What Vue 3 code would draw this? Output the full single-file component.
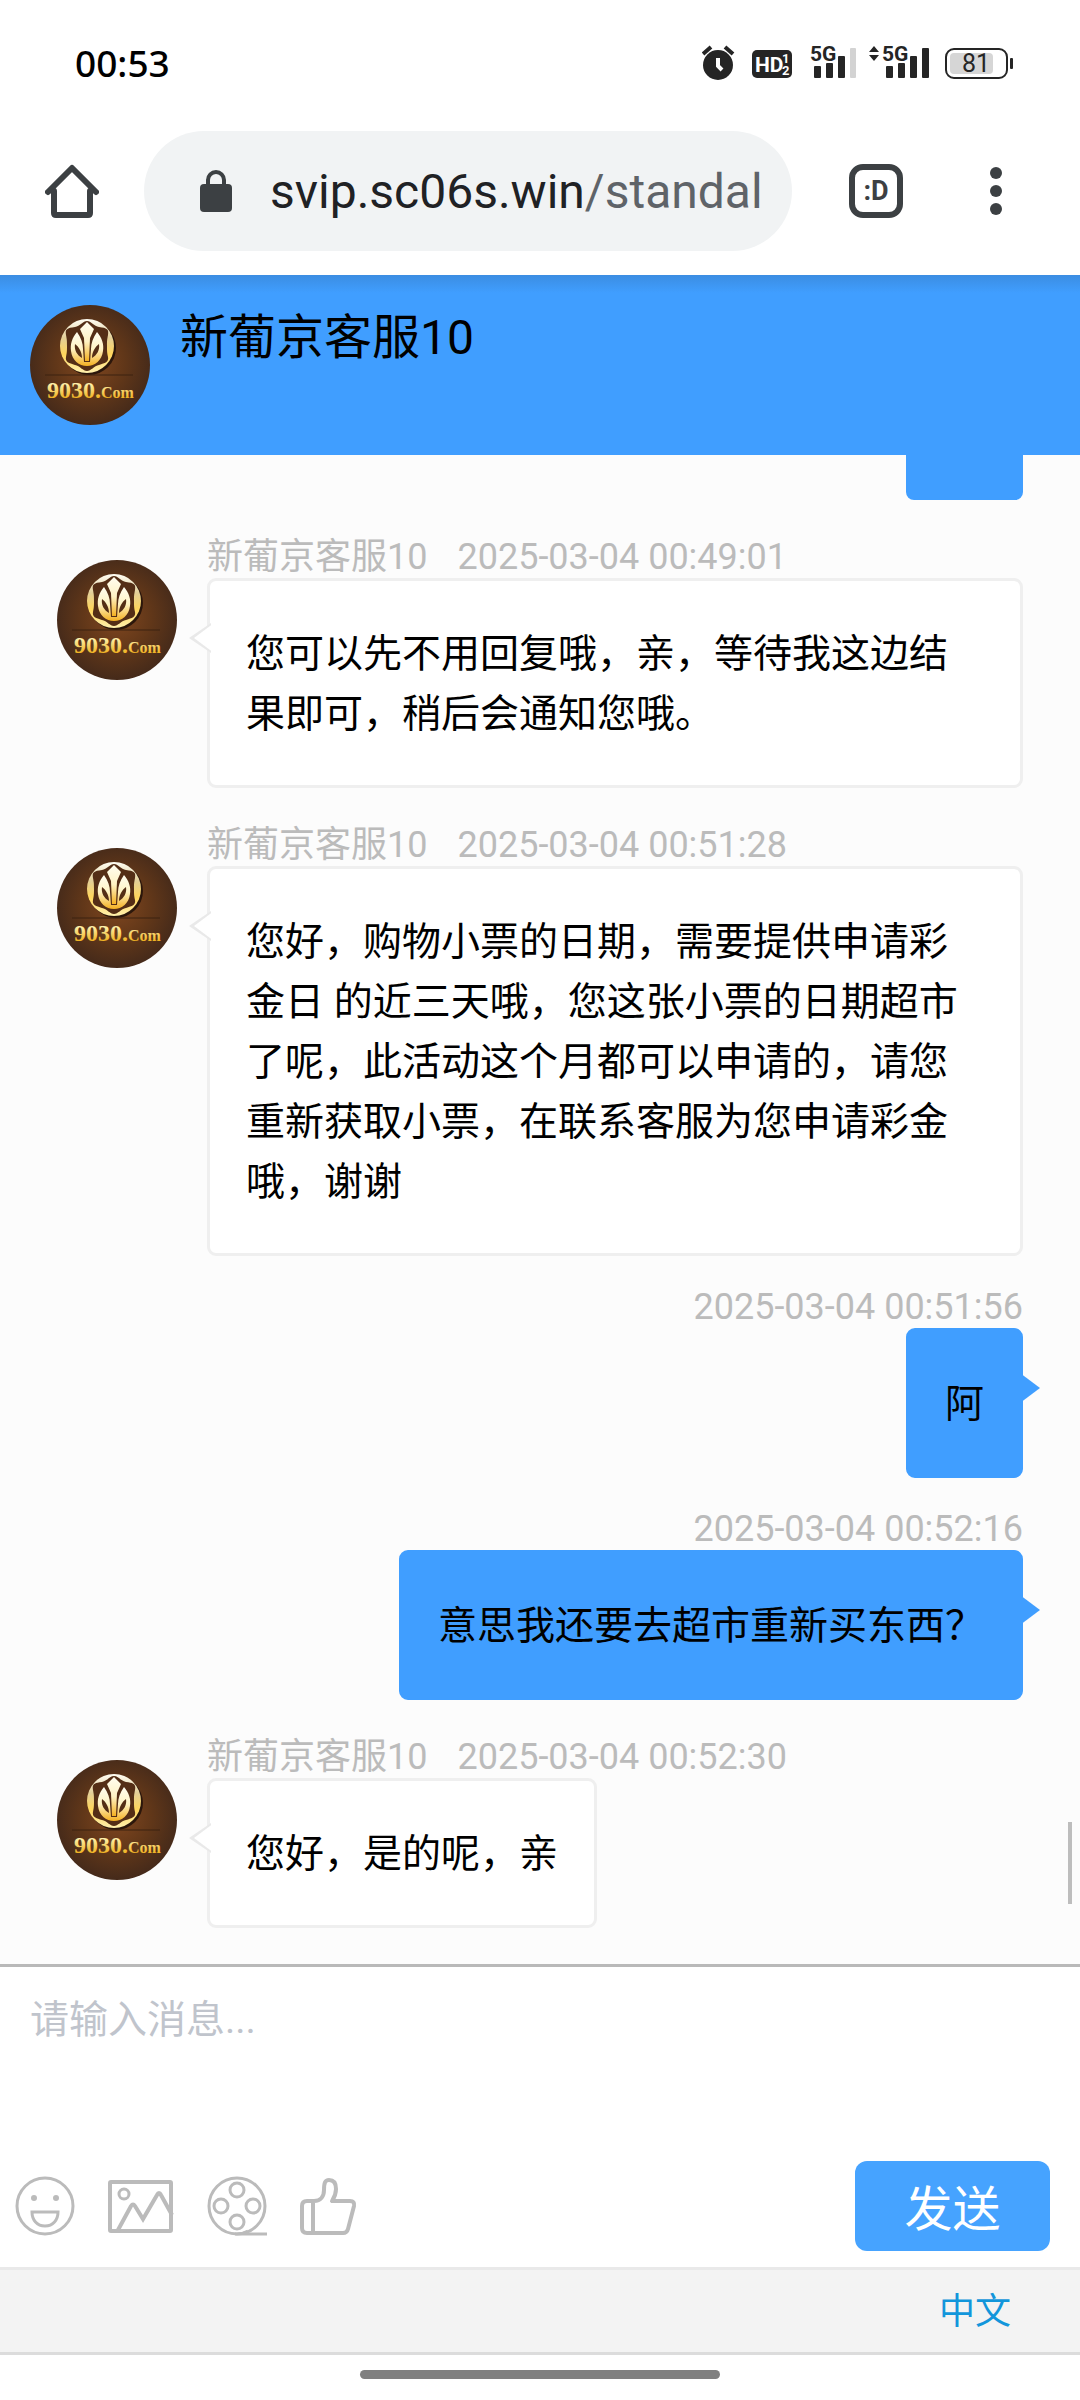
<script setup>
import { ref } from 'vue'

const agent = '新葡京客服10'
const draft = ref('')

const messages = [
  {
    from: 'agent',
    time: '2025-03-04 00:49:01',
    text: '您可以先不用回复哦，亲，等待我这边结果即可，稍后会通知您哦。',
  },
  {
    from: 'agent',
    time: '2025-03-04 00:51:28',
    text: '您好，购物小票的日期，需要提供申请彩金日 的近三天哦，您这张小票的日期超市了呢，此活动这个月都可以申请的，请您重新获取小票，在联系客服为您申请彩金哦，谢谢',
  },
  { from: 'me', time: '2025-03-04 00:51:56', text: '阿' },
  { from: 'me', time: '2025-03-04 00:52:16', text: '意思我还要去超市重新买东西？' },
  { from: 'agent', time: '2025-03-04 00:52:30', text: '您好，是的呢，亲' },
]
</script>

<template>
  <div class="page" lang="zh-CN">
    <!-- shared avatar artwork -->
    <svg class="sprite" aria-hidden="true">
      <defs>
        <radialGradient id="brown" cx="50%" cy="48%" r="52%">
          <stop offset="0" stop-color="#81471f" />
          <stop offset="0.55" stop-color="#613719" />
          <stop offset="1" stop-color="#452a1a" />
        </radialGradient>
        <linearGradient id="gold" x1="0" y1="0" x2="0" y2="1">
          <stop offset="0" stop-color="#fffdf0" />
          <stop offset="0.5" stop-color="#fff3c4" />
          <stop offset="1" stop-color="#f3b021" />
        </linearGradient>
        <linearGradient id="ring" x1="0" y1="0" x2="0" y2="1">
          <stop offset="0" stop-color="#fffef5" />
          <stop offset="0.35" stop-color="#e3cf98" />
          <stop offset="0.65" stop-color="#ffd65c" />
          <stop offset="1" stop-color="#fff0ad" />
        </linearGradient>
        <linearGradient id="letters" x1="0" y1="0" x2="0" y2="1">
          <stop offset="0.2" stop-color="#fff8b8" />
          <stop offset="0.8" stop-color="#f0b323" />
        </linearGradient>
      </defs>
      <symbol id="emblem" viewBox="0 0 120 120">
        <circle cx="60" cy="60" r="60" fill="url(#brown)" />
        <circle cx="59" cy="43" r="27" fill="#2c170b" />
        <circle cx="57" cy="41" r="27" fill="url(#ring)" />
        <path
          d="M57 16c4 0 7 5 12 6c8 1 10 2 9 8c-1 5-1 6-1 11s0 6 1 11c1 5-3 6-9 8c-5 1-8 6-12 6s-7-5-12-6c-6-2-10-3-9-8c1-5 1-6 1-11s0-6-1-11c-1-6 1-7 9-8c5-1 8-6 12-6z"
          fill="#542e16"
        />
        <path
          d="M47 27c-5 6-7 12-6 19c1 9 8 15 16 15s15-6 16-15c1-7-1-13-6-19c-4 6-6 11-6 17l-1 13h-6l-1-13c0-6-2-11-6-17z"
          fill="url(#gold)"
        />
        <path d="M57 17l7 7l-4 9l-1 23h-4l-1-23l-4-9z" fill="url(#gold)" />
        <path
          d="M45 39c4 3 7 8 7 14c-5-3-8-8-7-14zM69 39c-4 3-7 8-7 14c5-3 8-8 7-14z"
          fill="#542e16"
        />
        <path d="M15 70h88" stroke="#3d2210" stroke-width="1" />
      </symbol>
    </svg>

    <div class="status-bar">
      <time class="clock">00:53</time>
      <svg class="status-icons" viewBox="0 0 312 40" aria-hidden="true">
        <g fill="#252525">
          <circle cx="16" cy="23" r="15" />
          <path d="M1 12l8-7M31 12l-8-7" stroke="#252525" stroke-width="4" />
          <path d="M16 16v8l4 4" fill="none" stroke="#fff" stroke-width="4" />
          <rect x="50" y="8" width="40" height="28" rx="5" />
        </g>
        <g class="narrow" fill="#fff">
          <text x="53" y="30" font-size="21">HD</text>
          <text x="80" y="21" font-size="13">1</text>
          <text x="80" y="33" font-size="13">2</text>
        </g>
        <g class="narrow" fill="#252525" font-size="21">
          <text x="108" y="19">5G</text>
          <text x="180" y="19">5G</text>
        </g>
        <g fill="#252525">
          <rect x="112" y="24" width="7" height="12" rx="1" />
          <rect x="124" y="21" width="7" height="15" rx="1" />
          <rect x="136" y="14" width="7" height="22" rx="1" />
          <rect x="148" y="6" width="6" height="30" rx="1" fill="#d3d3d3" />
          <rect x="184" y="24" width="7" height="12" rx="1" />
          <rect x="196" y="21" width="7" height="15" rx="1" />
          <rect x="208" y="14" width="7" height="22" rx="1" />
          <rect x="220" y="6" width="7" height="30" rx="1" />
          <path d="M167 10l5-6l5 6zM167 13h10l-5 6z" />
          <rect x="308" y="16" width="3" height="11" rx="1" />
        </g>
        <rect x="244" y="7" width="61" height="29" rx="8" fill="none" stroke="#252525" stroke-width="2" />
        <rect x="248" y="11" width="43" height="21" rx="4" fill="#d6d6d6" />
        <text class="battery" x="260" y="30">81</text>
      </svg>
    </div>

    <div class="browser-bar">
      <button class="bar-button" type="button" aria-label="主页">
        <svg viewBox="0 0 54 54" width="54" height="54">
          <path
            d="M9 27v22q0 2 2 2h32q2 0 2-2V27M3 28L27 4l24 24"
            fill="none"
            stroke="#3c4043"
            stroke-width="6"
            stroke-linecap="round"
            stroke-linejoin="round"
          />
        </svg>
      </button>
      <button class="address" type="button">
        <svg viewBox="0 0 32 42" width="32" height="42" aria-hidden="true">
          <rect y="14" width="32" height="28" rx="4" fill="#3c4043" />
          <path d="M8 16v-6a8 8 0 0 1 16 0v6" fill="none" stroke="#3c4043" stroke-width="4" />
        </svg>
        <span class="url">svip.sc06s.win<span class="path">/standal</span></span>
      </button>
      <button class="bar-button tabs" type="button">:D</button>
      <button class="bar-button menu" type="button" aria-label="菜单">
        <svg viewBox="0 0 12 48" width="12" height="48" fill="#3c4043">
          <circle cx="6" cy="6" r="6" />
          <circle cx="6" cy="24" r="6" />
          <circle cx="6" cy="42" r="6" />
        </svg>
      </button>
    </div>

    <header class="chat-header">
      <svg class="avatar" viewBox="0 0 120 120">
        <use href="#emblem" />
        <text x="17" y="93" fill="url(#letters)">9030.<tspan class="com">Com</tspan></text>
      </svg>
      <h1>{{ agent }}</h1>
    </header>

    <main class="messages">
      <div class="bubble-end"></div>
      <article v-for="item in messages" :key="item.time" class="message" :class="item.from">
        <svg v-if="item.from === 'agent'" class="avatar" viewBox="0 0 120 120">
          <use href="#emblem" />
          <text x="17" y="93" fill="url(#letters)">9030.<tspan class="com">Com</tspan></text>
        </svg>
        <div class="body">
          <div class="meta">
            <span v-if="item.from === 'agent'">{{ agent }}</span>
            <time>{{ item.time }}</time>
          </div>
          <p class="bubble">{{ item.text }}</p>
        </div>
      </article>
      <span class="scroll-thumb"></span>
    </main>

    <form class="composer" @submit.prevent="draft = ''">
      <textarea v-model="draft" placeholder="请输入消息..." aria-label="请输入消息"></textarea>
      <div class="toolbar">
        <button class="tool" type="button" aria-label="表情">
          <svg viewBox="0 0 60 60" width="60" height="60">
            <circle cx="30" cy="30" r="28" stroke-width="3" />
            <path d="M17 36h26c0 8-5 14-13 14s-13-6-13-14z" stroke-width="3" />
            <circle class="solid" cx="19" cy="22" r="3" />
            <circle class="solid" cx="41" cy="22" r="3" />
          </svg>
        </button>
        <button class="tool" type="button" aria-label="图片">
          <svg viewBox="0 0 66 60" width="66" height="60">
            <rect x="2" y="6" width="61" height="49" rx="1" stroke-width="4" />
            <circle cx="16" cy="18" r="5" stroke-width="3" />
            <path d="M10 54L23 30q2-3 4 0l8 13L49 19q2-4 4 0l11 20" stroke-width="4" />
          </svg>
        </button>
        <button class="tool" type="button" aria-label="视频">
          <svg viewBox="0 0 60 60" width="60" height="60" stroke-width="3">
            <circle cx="30" cy="30" r="28" />
            <path d="M28 58h32M30 58q6 0 11-3" />
            <circle cx="30" cy="14" r="7" />
            <circle cx="14" cy="30" r="7" />
            <circle cx="46" cy="30" r="7" />
            <circle cx="30" cy="46" r="7" />
          </svg>
        </button>
        <button class="tool" type="button" aria-label="点赞">
          <svg viewBox="0 0 57 60" width="57" height="60">
            <path
              d="M7 25h7c7 0 10-5 10-11c0-7 1-10 5-10c5 0 7 4 7 9c0 5-2 9-4 12h18q5 0 4 5l-6 23q-1 4-5 4H7q-5 0-5-5V30q0-5 5-5zM13 25v32"
              stroke-width="4"
              stroke-linejoin="round"
            />
          </svg>
        </button>
        <button class="send" type="submit">发送</button>
      </div>
    </form>

    <footer class="language">
      <a href="#">中文</a>
    </footer>
    <div class="gesture-bar"><span></span></div>
  </div>
</template>

<style>
body {
  background: #fff;
}
</style>

<style scoped>
.page {
  display: flex;
  min-height: 100vh;
  flex-direction: column;
  background: #fff;
  color: #000;
  font-family: Roboto, "Noto Sans CJK SC", sans-serif;
}

button {
  border: 0;
  background: transparent;
  padding: 0;
  font-family: inherit;
}

svg {
  display: block;
}

.sprite {
  position: absolute;
  width: 0;
  height: 0;
}

.avatar {
  width: 120px;
  height: 120px;
  flex: none;
  font-family: "Liberation Serif", serif;
  font-size: 24px;
  font-weight: 700;
}

.com {
  font-size: 16px;
}

.status-bar {
  display: flex;
  height: 126px;
  box-sizing: border-box;
  align-items: center;
  justify-content: space-between;
  padding: 0 66px 2px 75px;
}

.clock {
  font-family: "Noto Sans", sans-serif;
  font-size: 37px;
  font-weight: 500;
}

.status-icons {
  width: 312px;
  height: 40px;
}

.narrow {
  font-family: "Liberation Sans Narrow", Roboto, sans-serif;
  font-weight: 700;
}

.battery {
  fill: #252525;
  font-size: 25px;
}

.browser-bar {
  display: flex;
  align-items: center;
  padding: 5px 78px 24px 45px;
}

.bar-button {
  flex: none;
}

.address {
  display: flex;
  height: 120px;
  min-width: 0;
  flex: 1;
  align-items: center;
  gap: 38px;
  overflow: hidden;
  margin: 0 57px 0 45px;
  border-radius: 60px;
  background: #f1f3f4;
  padding: 0 24px 0 56px;
}

.url {
  color: #202124;
  font-size: 48px;
  white-space: nowrap;
}

.path {
  color: #5f6368;
}

.tabs {
  width: 54px;
  height: 54px;
  border: 6px solid #3c4043;
  border-radius: 14px;
  color: #3c4043;
  font-size: 27px;
  font-weight: 700;
}

.menu {
  margin-left: 87px;
}

.chat-header {
  display: flex;
  gap: 30px;
  background: linear-gradient(#3b8de2, #409eff 18px);
  padding: 30px;
}

.chat-header h1 {
  margin: 0;
  font-size: 48px;
  font-weight: 400;
  line-height: 66px;
}

.messages {
  position: relative;
  display: flex;
  flex: 1;
  flex-direction: column;
  gap: 30px;
  background: #fcfcfc;
  padding: 0 57px 36px;
}

.bubble-end {
  width: 117px;
  height: 45px;
  align-self: flex-end;
  border-radius: 0 0 8px 8px;
  background: #409eff;
}

.message {
  display: flex;
  gap: 30px;
}

.message .avatar {
  margin-top: 30px;
}

.body {
  display: flex;
  flex: 1;
  flex-direction: column;
  align-items: flex-start;
}

.me .body {
  align-items: flex-end;
}

.meta {
  display: flex;
  gap: 30px;
  color: #bbb;
  font-size: 36px;
  line-height: 42px;
}

.agent .meta {
  padding-top: 6px;
}

.bubble {
  position: relative;
  margin: 0;
  border: 3px solid #efefef;
  border-radius: 9px;
  background: #fff;
  padding: 43px 36px 41px;
  font-size: 39px;
  line-height: 60px;
}

.me .bubble {
  border-color: #409eff;
  background: #409eff;
}

.bubble::before,
.bubble::after {
  position: absolute;
  top: 42px;
  width: 20px;
  height: 30px;
  content: "";
}

.agent .bubble::before {
  right: 100%;
  width: 22px;
  margin-right: -1px;
  background: #e9e9e9;
  clip-path: polygon(100% 0, 0 50%, 100% 100%);
}

.agent .bubble::after {
  right: 100%;
  margin-right: -4px;
  background: #fff;
  clip-path: polygon(100% 0, 0 50%, 100% 100%);
}

.me .bubble::after {
  left: 100%;
  background: #409eff;
  clip-path: polygon(0 0, 100% 50%, 0 100%);
}

.scroll-thumb {
  position: absolute;
  right: 8px;
  bottom: 60px;
  width: 4px;
  height: 82px;
  background: #bdbdbd;
}

.composer {
  border-top: 3px solid #b9b9b9;
  background: #fff;
}

.composer textarea {
  display: block;
  width: 100%;
  height: 194px;
  box-sizing: border-box;
  border: 0;
  outline: none;
  resize: none;
  padding: 23px 30px;
  font-family: inherit;
  font-size: 39px;
  line-height: 60px;
}

.composer textarea::placeholder {
  color: #c0c4cc;
}

.toolbar {
  display: flex;
  align-items: center;
  gap: 33px;
  padding: 0 30px 16px 15px;
}

.tool svg {
  fill: none;
  stroke: #bbb;
}

.tool .solid {
  fill: #bbb;
  stroke: none;
}

.send {
  width: 195px;
  height: 90px;
  margin-left: auto;
  border-radius: 12px;
  background: #46a3ff;
  padding-bottom: 3px;
  color: #fff;
  font-size: 48px;
}

.language {
  display: flex;
  justify-content: flex-end;
  border-top: 3px solid #e9e9e9;
  border-bottom: 3px solid #dcdcdc;
  background: #f3f3f3;
  padding: 2px 69px 0;
}

.language a {
  color: #1296db;
  font-size: 36px;
  line-height: 80px;
  text-decoration: none;
}

.gesture-bar {
  display: flex;
  justify-content: center;
  padding: 15px 0 21px;
}

.gesture-bar span {
  width: 360px;
  height: 9px;
  border-radius: 5px;
  background: #808080;
}
</style>
